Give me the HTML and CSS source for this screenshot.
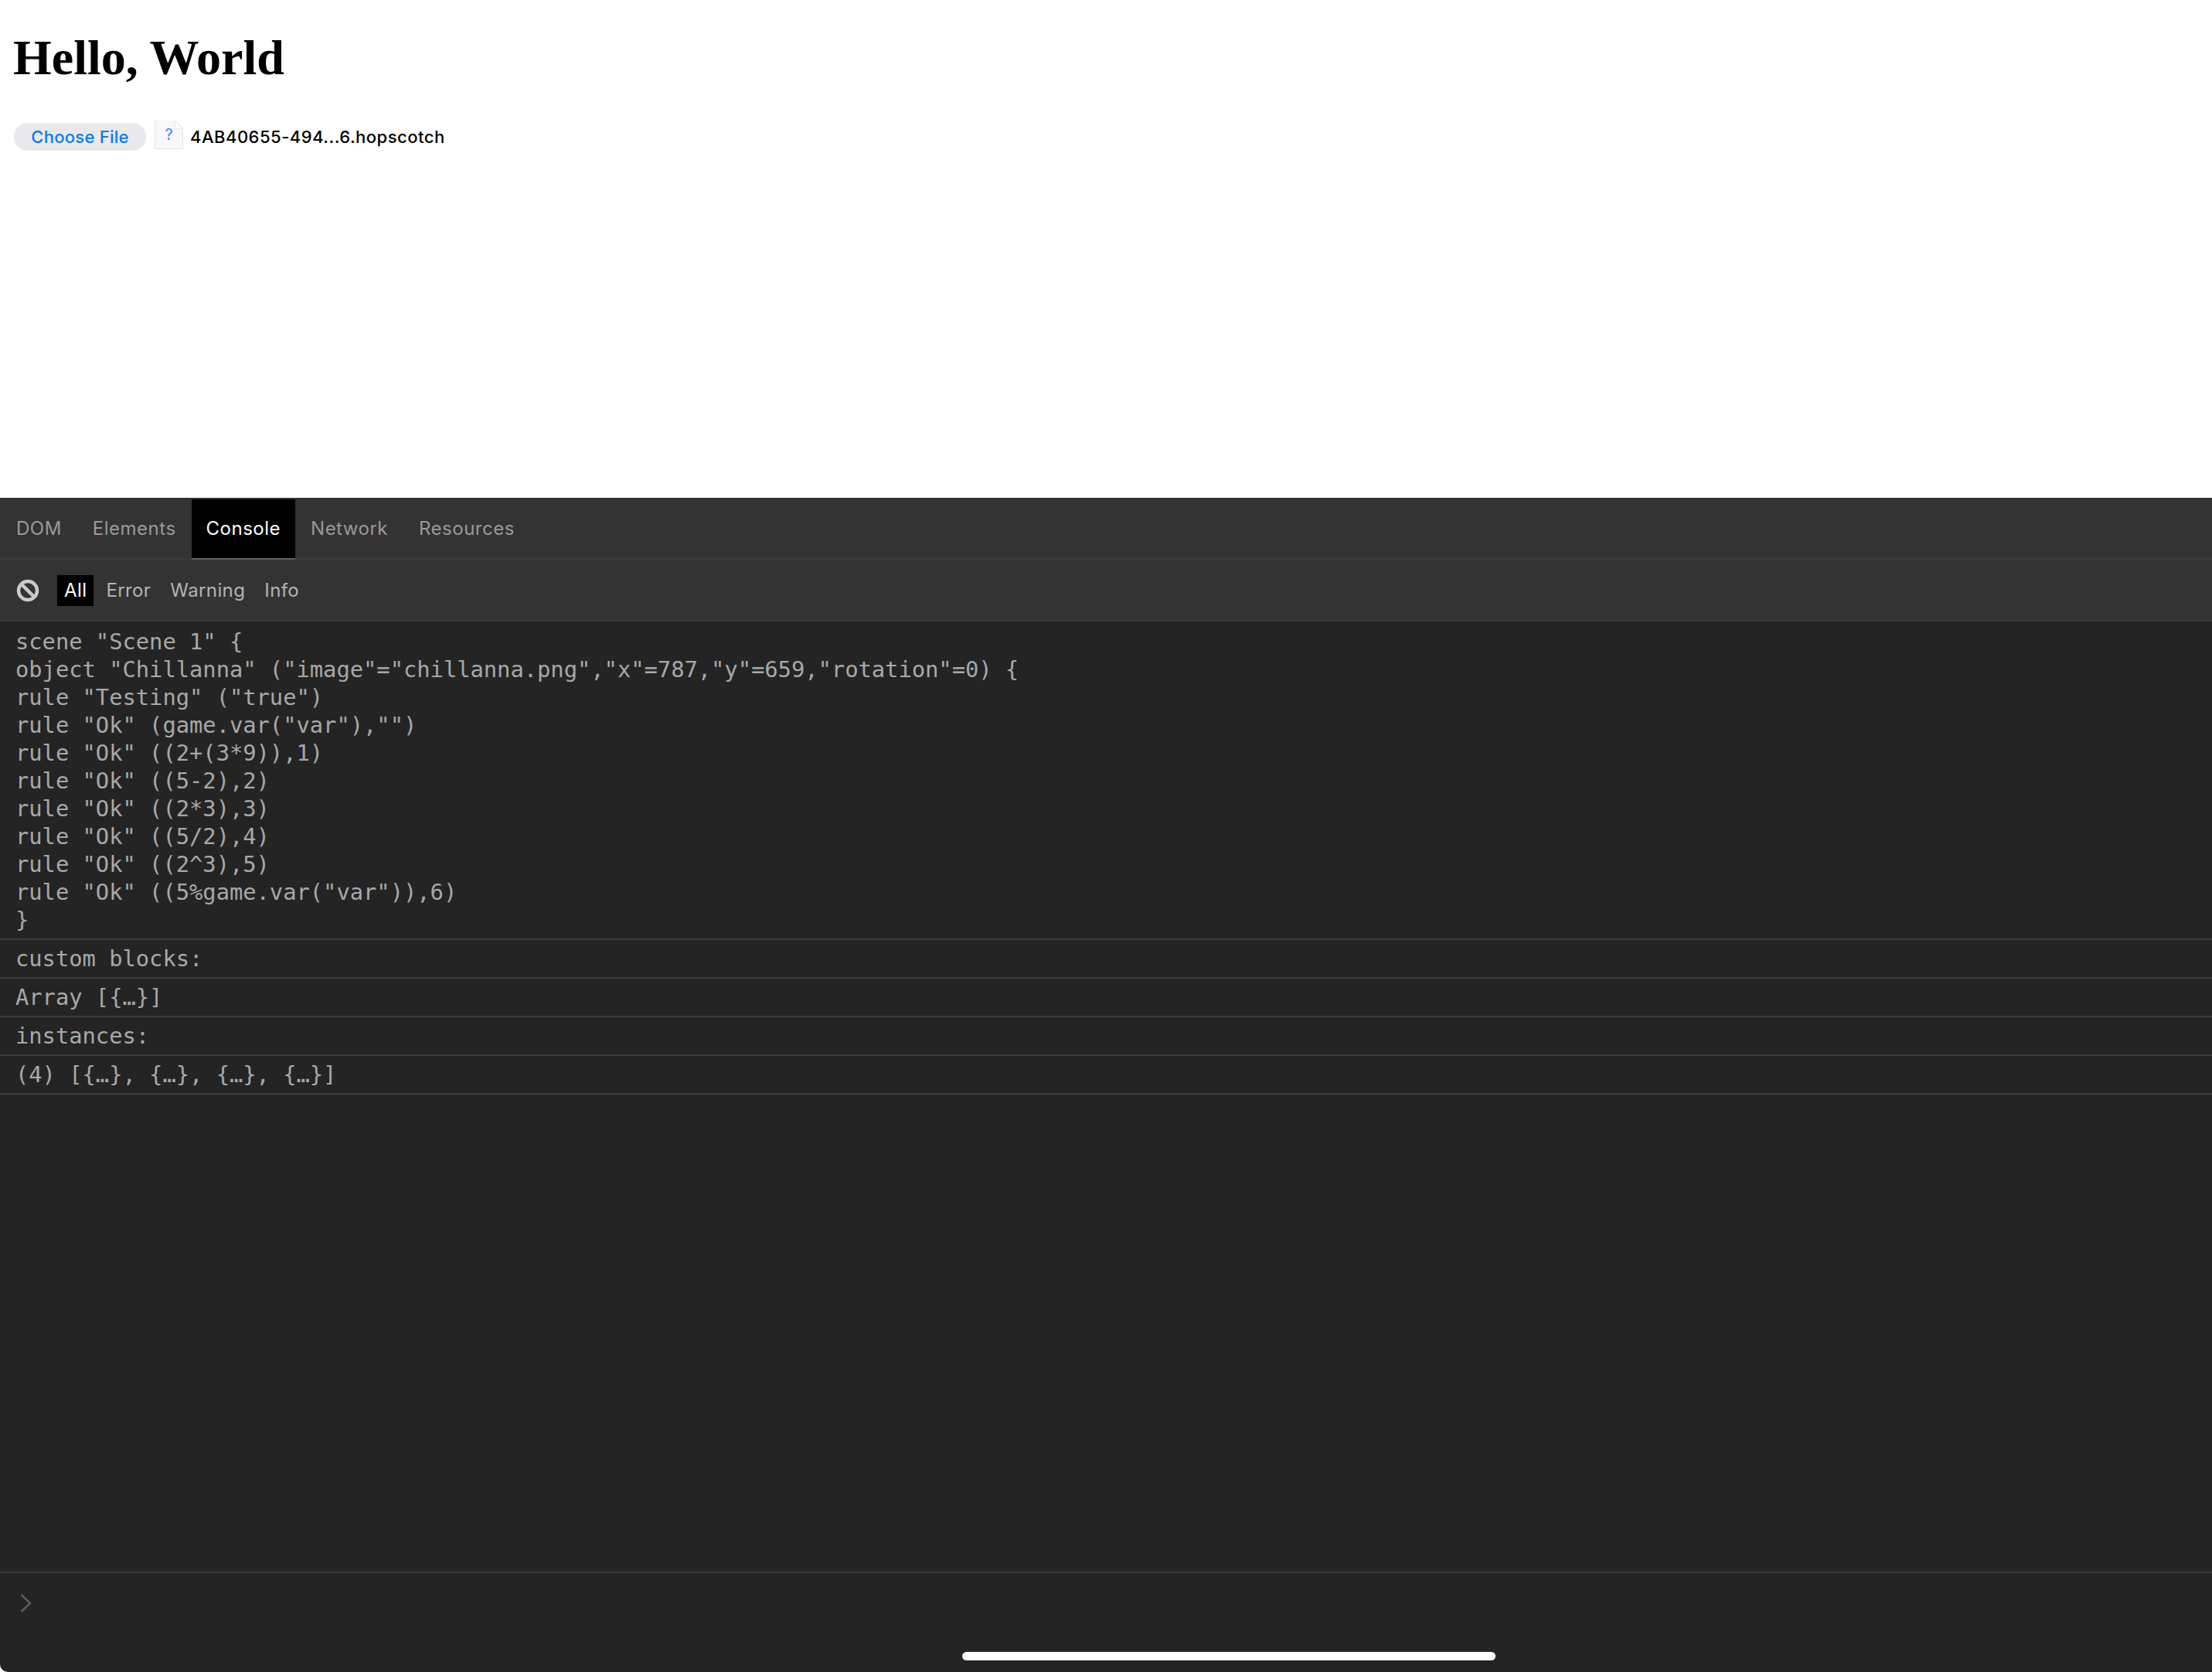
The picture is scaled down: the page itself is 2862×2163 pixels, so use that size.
FILE: index.html
```html
<!DOCTYPE html>
<html lang="en">
<head>
<meta charset="utf-8">
<title>Hello, World</title>
<link rel="stylesheet" href="styles.css">
</head>
<body>
<main class="page">
  <h1 class="title">Hello, World</h1>
  <div class="file-input">
    <button class="choose" type="button">Choose File</button>
    <div class="file-icon">
      <svg class="file-shape" width="37" height="37" viewBox="0 0 37 37" aria-hidden="true">
        <path d="M0.5 0H26L36.5 10.5V36.5H0.5Z" fill="#f8f8f9"/>
        <path d="M0.5 0V36.5H36.5V10.5" fill="none" stroke="#e4e4e6"/>
        <path d="M26 0V10.5H36.5Z" fill="#fff" stroke="#e4e4e6"/>
      </svg>
      <span class="file-q">?</span>
    </div>
    <span class="file-name">4AB40655-494...6.hopscotch</span>
  </div>
</main>
<section class="devtools">
  <nav class="tabs">
    <span class="tab">DOM</span>
    <span class="tab">Elements</span>
    <span class="tab tab-active">Console</span>
    <span class="tab">Network</span>
    <span class="tab">Resources</span>
  </nav>
  <div class="filters">
    <svg class="clear" width="30" height="30" viewBox="0 0 30 30" aria-hidden="true">
      <circle cx="15" cy="15" r="12" fill="none" stroke="#cacaca" stroke-width="4.5"/>
      <path d="M6.5 6.5L23.5 23.5" stroke="#cacaca" stroke-width="4.5"/>
    </svg>
    <span class="filter filter-active">All</span>
    <span class="filter">Error</span>
    <span class="filter">Warning</span>
    <span class="filter">Info</span>
  </div>
  <div class="log">
    <div class="entry entry-first">scene "Scene 1" {
object "Chillanna" ("image"="chillanna.png","x"=787,"y"=659,"rotation"=0) {
rule "Testing" ("true")
rule "Ok" (game.var("var"),"")
rule "Ok" ((2+(3*9)),1)
rule "Ok" ((5-2),2)
rule "Ok" ((2*3),3)
rule "Ok" ((5/2),4)
rule "Ok" ((2^3),5)
rule "Ok" ((5%game.var("var")),6)
}</div>
    <div class="entry">custom blocks:</div>
    <div class="entry">Array [{…}]</div>
    <div class="entry">instances:</div>
    <div class="entry">(4) [{…}, {…}, {…}, {…}]</div>
  </div>
  <div class="prompt">
    <svg class="chevron" width="15" height="25" viewBox="0 0 15 25" aria-hidden="true">
      <path d="M1.5 1L13 12L1.5 23" fill="none" stroke="#5c5c5c" stroke-width="2.5"/>
    </svg>
  </div>
  <div class="home-bar"></div>
</section>
</body>
</html>
```
FILE: styles.css
```css
* { box-sizing: border-box; }
html, body { margin: 0; padding: 0; height: 100%; background: #fff; }
body { display: flex; flex-direction: column; height: 2163px; overflow: hidden; }

.page { height: 644px; padding: 0 0 0 17px; font-family: "Liberation Serif", serif; color: #000; }
.title { margin: 0; padding-top: 38px; font-size: 64px; line-height: 74px; font-weight: 700; }

.file-input { display: flex; align-items: flex-start; margin-top: 44px; font-family: Inter, "Liberation Sans", sans-serif; }
.choose { width: 171px; height: 36px; margin: 3px 0 0 1px; padding: 0; border: 0; border-radius: 18px; background: #e9e9eb; color: #007aff; font: 500 22px/36px Inter, "Liberation Sans", sans-serif; letter-spacing: 0.25px; }
.file-icon { position: relative; width: 37px; height: 37px; margin-left: 11px; }
.file-shape { display: block; }
.file-q { position: absolute; left: 0; right: 0; top: 6px; text-align: center; color: #2f8cff; font-size: 20px; line-height: 24px; }
.file-name { margin-left: 9px; color: #000; font-size: 22px; line-height: 42px; font-weight: 500; letter-spacing: 0.5px; }

.devtools { position: relative; flex: 1; display: flex; flex-direction: column; background: #242424; border-radius: 0 0 0 10px; font-family: Inter, "Liberation Sans", sans-serif; overflow: hidden; }

.tabs { display: flex; height: 80px; padding: 2px 0 0 1px; background: #333; border-bottom: 2px solid #3d3d3d; color: #999; font-size: 24px; letter-spacing: 0.5px; }
.tab { height: 78px; padding: 0 20px; line-height: 76px; }
.tab-active { padding: 0 19px; background: #000; color: #fff; border-bottom: 2px solid #626262; }

.filters { display: flex; align-items: center; height: 80px; padding: 2px 0 0 21px; background: #333; border-bottom: 2px solid #3d3d3d; color: #b4b4b4; font-size: 24px; letter-spacing: 0.4px; }
.clear { margin-right: 23px; }
.filter { height: 40px; padding: 0 9px; margin-right: 7px; line-height: 40px; }
.filter-active { background: #000; color: #fff; }

.log { flex: 1; font-family: "DejaVu Sans Mono", "Liberation Mono", monospace; font-size: 28.75px; line-height: 36px; color: #a8a8a8; }
.entry { padding: 6px 20px; border-bottom: 2px solid #3a3a3a; white-space: pre; }
.entry-first { padding-top: 8px; padding-bottom: 6px; }

.prompt { height: 130px; padding: 27px 0 0 26px; border-top: 2px solid #3a3a3a; }
.chevron { display: block; }

.home-bar { position: absolute; left: 1245px; bottom: 15px; width: 690px; height: 11px; border-radius: 6px; background: #fff; }
```
